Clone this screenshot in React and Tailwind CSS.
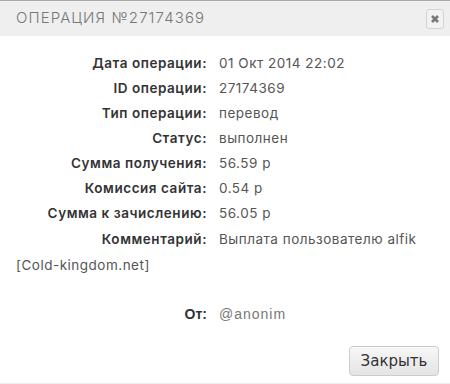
export default function App() {
  const rows = [
    ["Дата операции:", "01 Окт 2014 22:02"],
    ["ID операции:", "27174369"],
    ["Тип операции:", "перевод"],
    ["Статус:", "выполнен"],
    ["Сумма получения:", "56.59 р"],
    ["Комиссия сайта:", "0.54 р"],
    ["Сумма к зачислению:", "56.05 р"],
  ];
  const font = { fontFamily: "Inter, 'Noto Sans', sans-serif" };
  return (
    <div className="w-[450px] h-[384px] bg-white flex flex-col overflow-hidden border-b border-[#eeeeee]">
      <div className="h-[36px] bg-[#efefef] border-t border-[#a8a8a8] flex items-center justify-between pl-[16px] pr-[6px] shrink-0">
        <span className="text-[15px] text-[#777777] tracking-[1.1px] font-light" style={font}>
          ОПЕРАЦИЯ №27174369
        </span>
        <button className="w-[18px] h-[20px] rounded-[3px] border border-[#d4d4d4] bg-[#f2f2f2] flex items-center justify-center">
          <svg width="10" height="10" viewBox="0 0 10 10">
            <path d="M2 2 L8 8 M8 2 L2 8" stroke="#777" strokeWidth="2.6" strokeLinecap="butt" />
          </svg>
        </button>
      </div>
      <div className="flex-1 flex flex-col px-[16px] pt-[15px]">
        <div className="text-[13.5px] leading-[25px] text-[#333333]" style={font}>
          {rows.map(([l, v]) => (
            <div key={l}>
              <span className="inline-block w-[191px] text-right font-semibold text-[#333333] tracking-[0.55px]">{l}</span>
              <span className="ml-[12px] text-[#555555] tracking-[0.5px]">{v}</span>
            </div>
          ))}
          <div className="leading-[26px]">
            <span className="inline-block w-[191px] text-right font-semibold text-[#333333] tracking-[0.55px]">Комментарий:</span>
            <span className="ml-[12px] text-[#555555] tracking-[0.5px]">
              Выплата пользователю alfik [Cold-kingdom.net]
            </span>
          </div>
        </div>
        <div className="mt-[24px] text-[14px] leading-[25px]" style={{ fontFamily: "'Liberation Sans', Arial, sans-serif" }}>
          <span className="inline-block w-[191px] text-right font-bold text-[#333333]">От:</span>
          <span className="ml-[12px] text-[#777777] tracking-[1px]">@anonim</span>
        </div>
        <div className="flex-1" />
        <div className="flex justify-end pb-[7px]">
          <button
            className="w-[90px] h-[30px] rounded-[4px] border border-[#cccccc] bg-gradient-to-b from-[#f7f7f7] to-[#e4e4e4] text-[15px] text-[#333333] mr-[-5px]"
            style={{ fontFamily: "'DejaVu Sans', Verdana, sans-serif" }}
          >
            Закрыть
          </button>
        </div>
      </div>
    </div>
  );
}
